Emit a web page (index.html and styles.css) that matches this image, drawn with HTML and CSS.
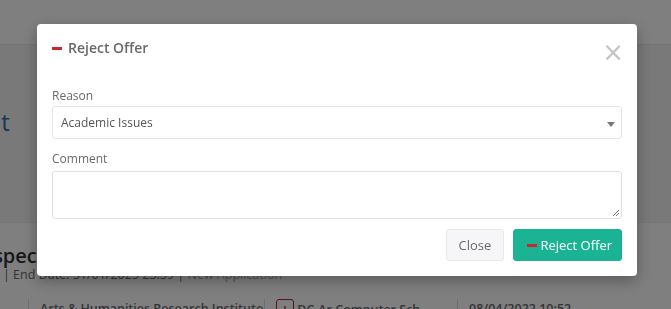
FILE: index.html
```html
<!DOCTYPE html>
<html lang="en">
<head>
    <meta charset="UTF-8">
    <meta name="viewport" content="width=device-width, initial-scale=1.0">
    <title>Reject Offer</title>
    <link rel="stylesheet" href="styles.css">
</head>
<body>

    <!-- Page behind the dialog -->
    <div class="topbar"></div>

    <div class="pageHeading">
        <h2>Applicant</h2>
    </div>

    <div class="card">
        <h3 class="cardTitle">Prospect</h3>
        <div class="cardMeta">| End Date: 31/01/2025 23:59 | <span class="muted">New Application</span></div>
        <div class="cardRow">
            <div class="cell inst">Arts &amp; Humanities Research Institute</div>
            <div class="cell prog"><span class="badge">!</span> DC-Ar Computer Sch</div>
            <div class="cell date">08/04/2022 10:52</div>
        </div>
    </div>

    <!-- Dialog -->
    <div class="backdrop"></div>

    <div class="modal">
        <div class="modalHeader">
            <h4 class="modalTitle"><span class="dash"></span>Reject Offer</h4>
            <span class="closeX">&times;</span>
        </div>

        <div class="field">
            <label>Reason</label>
            <div class="selectBox">
                <span>Academic Issues</span>
                <span class="caret"></span>
            </div>
        </div>

        <div class="field">
            <label>Comment</label>
            <div class="textBox">
                <svg class="grip" width="9" height="9" viewBox="0 0 9 9">
                    <path d="M8 2 L2 8 M8 5 L5 8" stroke="#777" stroke-width="1" fill="none"/>
                </svg>
            </div>
        </div>

        <div class="modalFooter">
            <button class="btn btnWhite">Close</button>
            <button class="btn btnPrimary"><span class="dash"></span>Reject Offer</button>
        </div>
    </div>

</body>
</html>
```

FILE: styles.css
```css
body {
    margin: 0;
    padding: 0;
    height: 309px;
    background-color: #f3f3f4;
    font-family: 'Open Sans', 'Liberation Sans', sans-serif;
    color: #676a6c;
    overflow: hidden;
}

/* Page behind */
.topbar {
    height: 44px;
    background: white;
    border-bottom: 1px solid #e7eaec;
}

.pageHeading {
    height: 177px;
    margin-left: -95px;
}

.pageHeading h2 {
    margin: 0;
    padding-top: 60px;
    font-size: 24px;
    font-weight: 400;
    color: #2f6fa7;
}

.card {
    background: white;
    border-top: 1px solid #e7eaec;
    height: 87px;
    overflow: hidden;
}

.cardTitle {
    margin: 0 0 0 -40px;
    padding-top: 22px;
    font-size: 20px;
    font-weight: 600;
    line-height: 22px;
    color: #333;
}

.cardTitle,
.cardMeta,
.cardRow {
    white-space: nowrap;
}

.cardMeta {
    font-size: 12.5px;
    line-height: 18px;
    margin-top: -1px;
    padding-left: 3px;
}

.muted {
    color: #a8a8a8;
}

.cardRow {
    display: flex;
    margin-top: 15px;
    padding-left: 28px;
    font-size: 12.5px;
    font-weight: 600;
}

.cell {
    border-left: 1px solid #ddd;
    padding-left: 11px;
    line-height: 20px;
    overflow: hidden;
}

.inst { width: 224px; }
.prog { width: 181px; }

.badge {
    display: inline-block;
    width: 16px;
    height: 16px;
    border: 1px solid #b0293a;
    border-radius: 3px;
    color: #b0293a;
    font-size: 11px;
    text-align: center;
}

/* Dialog */
.backdrop {
    position: fixed;
    top: 0;
    left: 0;
    right: 0;
    bottom: 0;
    background: rgba(0, 0, 0, 0.5);
}

.modal {
    position: fixed;
    top: 24px;
    left: 37px;
    width: 570px;
    padding: 15px;
    background: white;
    border-radius: 4px;
    box-shadow: 0 5px 15px rgba(0, 0, 0, 0.3);
}

.modalHeader {
    display: flex;
    justify-content: space-between;
    align-items: center;
    height: 18px;
}

.modalTitle {
    margin: 0;
    font-size: 14px;
    font-weight: 600;
    line-height: 18px;
    color: #676a6c;
    display: flex;
    align-items: center;
}

.dash {
    display: inline-block;
    width: 10px;
    height: 3px;
    background: #c9262f;
    margin-right: 6px;
}

.closeX {
    font-size: 26px;
    font-weight: 400;
    color: #c4c4c4;
    line-height: 18px;
    margin-right: -2px;
    margin-top: 8px;
    font-family: 'DejaVu Sans', sans-serif;
}

.field {
    margin-top: 30px;
}

.field + .field {
    margin-top: 11px;
}

.field label {
    display: block;
    font-size: 12px;
    line-height: 17px;
    margin-bottom: 2px;
    color: #676a6c;
}

.field + .field label {
    margin-bottom: 4px;
}

.selectBox {
    height: 31px;
    border: 1px solid #e5e6e7;
    border-radius: 3px;
    display: flex;
    align-items: center;
    justify-content: space-between;
    padding: 0 6px 0 8px;
    font-size: 12px;
    color: #555;
}

.caret {
    width: 0;
    height: 0;
    border-left: 4px solid transparent;
    border-right: 4px solid transparent;
    border-top: 5px solid #777;
    margin-top: 3px;
}

.textBox {
    height: 46px;
    border: 1px solid #dfe1e8;
    border-radius: 3px;
    position: relative;
}

.grip {
    position: absolute;
    right: 1px;
    bottom: 1px;
}

.modalFooter {
    display: flex;
    justify-content: flex-end;
    gap: 9px;
    margin-top: 10px;
}

.btn {
    height: 32px;
    border-radius: 3px;
    font-family: 'Open Sans', 'Liberation Sans', sans-serif;
    font-size: 13px;
    padding: 0 12px;
    display: flex;
    align-items: center;
    cursor: pointer;
}

.btnWhite {
    background: #f6f6f8;
    border: 1px solid #e7eaec;
    color: #676a6c;
}

.btnPrimary {
    background: #1ab394;
    border: 1px solid #1ab394;
    color: white;
    padding: 0 9px 0 13px;
}

.btnPrimary .dash {
    margin-right: 3px;
}
```
